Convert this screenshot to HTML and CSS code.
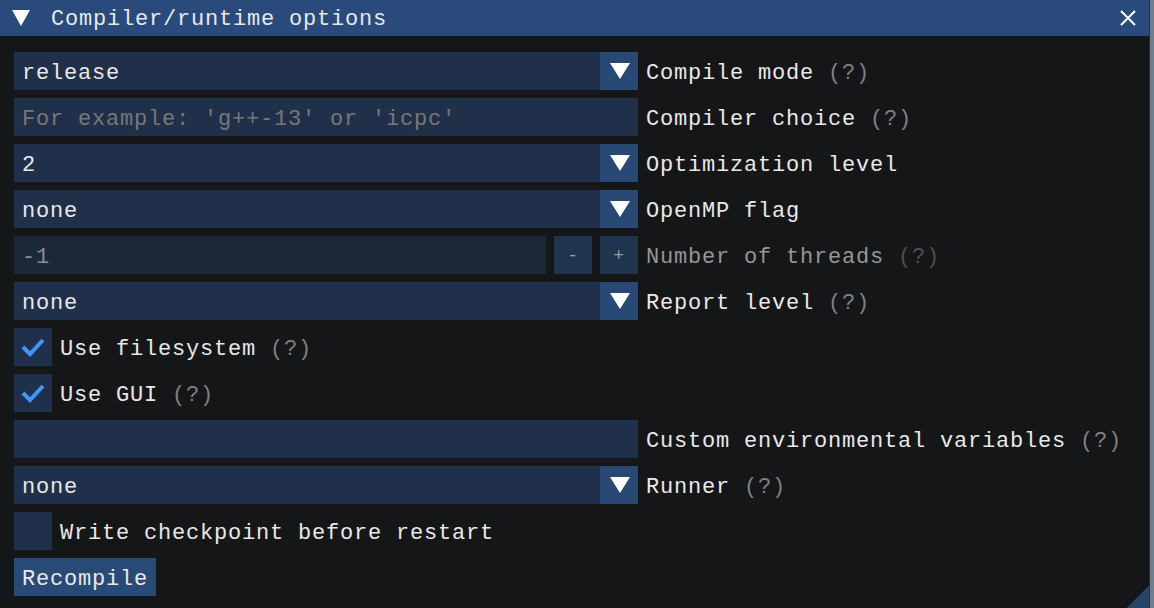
FILE: index.html
```html
<!DOCTYPE html>
<html>
<head>
<meta charset="utf-8">
<link rel="stylesheet" href="styles.css">
</head>
<body>
<div class="window">
  <div class="titlebar">
    <svg class="title-arrow" width="18" height="16" viewBox="0 0 18 16"><polygon points="0,0 18,0 9,16" fill="#fff"/></svg>
    <span class="title-text">Compiler/runtime options</span>
    <svg class="close" width="16" height="16" viewBox="0 0 16 16"><path d="M1 1 L15 15 M15 1 L1 15" stroke="#fff" stroke-width="2" fill="none"/></svg>
  </div>
  <div class="content">
    <div class="row">
      <div class="combo"><span class="val">release</span><span class="arrow"><svg width="20" height="16" viewBox="0 0 20 16"><polygon points="0,0 20,0 10,16" fill="#fff"/></svg></span></div>
      <span class="label">Compile mode <span class="help">(?)</span></span>
    </div>
    <div class="row">
      <div class="input"><span class="placeholder">For example: 'g++-13' or 'icpc'</span></div>
      <span class="label">Compiler choice <span class="help">(?)</span></span>
    </div>
    <div class="row">
      <div class="combo"><span class="val">2</span><span class="arrow"><svg width="20" height="16" viewBox="0 0 20 16"><polygon points="0,0 20,0 10,16" fill="#fff"/></svg></span></div>
      <span class="label">Optimization level</span>
    </div>
    <div class="row">
      <div class="combo"><span class="val">none</span><span class="arrow"><svg width="20" height="16" viewBox="0 0 20 16"><polygon points="0,0 20,0 10,16" fill="#fff"/></svg></span></div>
      <span class="label">OpenMP flag</span>
    </div>
    <div class="row disabled">
      <div class="stepper">
        <div class="input num"><span class="val">-1</span></div>
        <div class="step">-</div>
        <div class="step">+</div>
      </div>
      <span class="label">Number of threads <span class="help">(?)</span></span>
    </div>
    <div class="row">
      <div class="combo"><span class="val">none</span><span class="arrow"><svg width="20" height="16" viewBox="0 0 20 16"><polygon points="0,0 20,0 10,16" fill="#fff"/></svg></span></div>
      <span class="label">Report level <span class="help">(?)</span></span>
    </div>
    <div class="row">
      <div class="check"><svg width="26" height="22" viewBox="0 0 26 22"><path d="M3 11 L10 18 L23 4" stroke="#4296fa" stroke-width="4" fill="none" stroke-linejoin="miter"/></svg></div>
      <span class="label">Use filesystem <span class="help">(?)</span></span>
    </div>
    <div class="row">
      <div class="check"><svg width="26" height="22" viewBox="0 0 26 22"><path d="M3 11 L10 18 L23 4" stroke="#4296fa" stroke-width="4" fill="none" stroke-linejoin="miter"/></svg></div>
      <span class="label">Use GUI <span class="help">(?)</span></span>
    </div>
    <div class="row">
      <div class="input"></div>
      <span class="label">Custom environmental variables <span class="help">(?)</span></span>
    </div>
    <div class="row">
      <div class="combo"><span class="val">none</span><span class="arrow"><svg width="20" height="16" viewBox="0 0 20 16"><polygon points="0,0 20,0 10,16" fill="#fff"/></svg></span></div>
      <span class="label">Runner <span class="help">(?)</span></span>
    </div>
    <div class="row">
      <div class="check"></div>
      <span class="label">Write checkpoint before restart</span>
    </div>
    <div class="row">
      <div class="button">Recompile</div>
    </div>
  </div>
  <div class="grip"></div>
</div>
</body>
</html>
```
FILE: styles.css
```css
html, body {
  margin: 0;
  padding: 0;
  background: #6e7e8c;
}
body {
  width: 1154px;
  height: 608px;
  overflow: hidden;
  font-family: "Liberation Mono", "DejaVu Sans Mono", monospace;
  font-size: 22px;
  letter-spacing: 0.8px;
  color: #e8e8e8;
}
.window {
  position: relative;
  width: 1150px;
  height: 608px;
  background: #151618;
  border-right: 1px solid #2a2e36;
  box-sizing: border-box;
  overflow: hidden;
}
.titlebar {
  height: 36px;
  background: #294a7a;
  display: flex;
  align-items: center;
}
.title-arrow {
  margin-left: 12px;
  margin-top: -1px;
}
.title-text {
  margin-left: 21px;
  line-height: 32px;
  padding-top: 4px;
  flex: 1;
}
.close {
  margin-right: 13px;
}
.content {
  padding: 16px 14px;
  display: flex;
  flex-direction: column;
  gap: 8px;
}
.row {
  display: flex;
  align-items: center;
  gap: 8px;
  height: 38px;
}
.combo, .input {
  width: 624px;
  height: 38px;
  background: #20304a;
  display: flex;
  align-items: center;
  box-sizing: border-box;
}
.val, .placeholder {
  padding-left: 8px;
  flex: 1;
  line-height: 32px;
  padding-top: 6px;
}
.placeholder {
  color: #777;
}
.arrow {
  width: 38px;
  height: 38px;
  background: #274973;
  display: flex;
  align-items: center;
  justify-content: center;
}
.arrow svg {
  margin-left: 2px;
}
.label {
  line-height: 32px;
  padding-top: 6px;
  white-space: pre;
}
.help {
  color: #808080;
}
.stepper {
  display: flex;
  gap: 8px;
  width: 624px;
}
.input.num {
  width: 532px;
}
.step {
  width: 38px;
  height: 38px;
  background: #20344e;
  display: flex;
  align-items: center;
  justify-content: center;
  font-size: 18px;
  padding-top: 2px;
  box-sizing: border-box;
}
.disabled .input.num {
  background: #1c2738;
}
.disabled .val {
  color: #8c8c8c;
}
.disabled .step {
  color: #9a9a9a;
}
.disabled .label {
  color: #959595;
}
.disabled .help {
  color: #4e4e4e;
}
.check {
  width: 38px;
  height: 38px;
  background: #20304a;
  display: flex;
  align-items: center;
  justify-content: center;
}
.button {
  height: 38px;
  line-height: 32px;
  padding: 6px 8px 0;
  box-sizing: border-box;
  background: #284a77;
}
.grip {
  position: absolute;
  right: 0;
  bottom: 0;
  width: 22px;
  height: 22px;
  background: linear-gradient(135deg, transparent 50%, #26436a 50%);
}
```
